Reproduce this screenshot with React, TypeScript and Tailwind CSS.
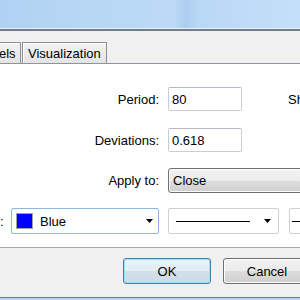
import React from "react";

const Arrow = () => (
  <svg width="7" height="4" viewBox="0 0 7 4" className="shrink-0">
    <path d="M0 0h7L3.5 4z" fill="#000" />
  </svg>
);

export default function App() {
  return (
    <div className="w-[300px] h-[300px] overflow-hidden flex flex-col bg-white font-['Liberation_Sans',Arial,sans-serif] text-[13px] text-black leading-none">
      {/* window frame top */}
      <div className="h-[28px] shrink-0 bg-[linear-gradient(90deg,#b0d1f2_0%,#b8d7f5_30%,#bcdaf6_58%,#abcdef_62%,#b9d8f6_66%,#c4dff9_100%)]" />
      <div className="h-px shrink-0 bg-[#e6f1fb]" />
      <div className="h-[2px] shrink-0 bg-[#707f90]" />
      {/* tab strip */}
      <div className="h-[33px] shrink-0 bg-[#f0f0f0] border-b border-[#8d949c] flex items-end">
        <div className="h-[21px] w-[21px] flex items-center border-t border-r border-[#8c8f96] bg-[linear-gradient(#f3f3f3,#e4e4e4)] shadow-[inset_0_1px_0_#ffffff]">
          <span className="ml-[-1px]">els</span>
        </div>
        <div className="h-[21px] ml-[1px] flex items-center pl-[5px] pr-[5px] border-t border-x border-[#8c8f96] bg-[linear-gradient(#f3f3f3,#e4e4e4)] shadow-[inset_1px_1px_0_#ffffff]">
          Visualization
        </div>
      </div>
      {/* content */}
      <div className="flex-1 bg-white flex flex-col">
        <div className="flex items-center h-[24px] mt-[23px]">
          <div className="w-[159px] text-right shrink-0">Period:</div>
          <div className="ml-[9px] w-[74px] h-[24px] shrink-0 border border-[#c9ced6] border-t-[#b4b9c1] rounded-[2px] flex items-center pl-[3px]">80</div>
          <div className="ml-[46px] whitespace-nowrap">Shift:</div>
        </div>
        <div className="flex items-center h-[24px] mt-[17px]">
          <div className="w-[159px] text-right shrink-0">Deviations:</div>
          <div className="ml-[9px] w-[74px] h-[24px] shrink-0 border border-[#c9ced6] border-t-[#b4b9c1] rounded-[2px] flex items-center pl-[3px]">0.618</div>
        </div>
        <div className="flex items-center h-[25px] mt-[16px]">
          <div className="w-[159px] text-right shrink-0">Apply to:</div>
          <div className="ml-[9px] w-[160px] h-[25px] shrink-0 border border-[#707070] rounded-[3px] flex items-center pl-[4px] bg-[linear-gradient(#f2f2f2_0%,#ebebeb_50%,#dddddd_51%,#cfcfcf_100%)] shadow-[inset_0_0_0_1px_#fcfcfc]">Close</div>
        </div>
        <div className="flex items-center h-[26px] mt-[15px]">
          <div className="w-[11px] shrink-0 pl-[0px]">:</div>
          <div className="w-[148px] h-[26px] shrink-0 border border-[#8cb8e2] rounded-[2px] flex items-center pl-[4px] pr-[5px]">
            <div className="w-[17px] h-[16px] border border-[#a0a0a0] bg-[#0000ff] shrink-0" />
            <span className="ml-[7px] flex-1">Blue</span>
            <Arrow />
          </div>
          <div className="ml-[9px] w-[111px] h-[26px] shrink-0 border border-[#cdd1d6] rounded-[2px] flex items-center pl-[7px] pr-[7px]">
            <div className="w-[74px] h-px bg-black" />
            <div className="flex-1" />
            <Arrow />
          </div>
          <div className="ml-[10px] w-[60px] h-[26px] shrink-0 border border-[#cdd1d6] rounded-[2px] flex items-center pl-[2px]">
            <div className="w-[40px] h-px bg-black" />
          </div>
        </div>
      </div>
      {/* button area */}
      <div className="h-[50px] shrink-0 bg-[#f0f0f0] border-t border-[#a9a9a9] flex items-start">
        <div className="ml-[123px] mt-[10px] w-[88px] h-[26px] shrink-0 border border-[#3c7fb1] rounded-[3px] flex items-center justify-center bg-[linear-gradient(#eaf3f9_0%,#e1ebf2_50%,#d2e0ea_51%,#cbdbe6_100%)] shadow-[inset_0_0_0_1px_#9fe0fb]">OK</div>
        <div className="ml-[12px] mt-[10px] w-[88px] h-[26px] shrink-0 border border-[#707070] rounded-[3px] flex items-center justify-center bg-[linear-gradient(#f2f2f2_0%,#ebebeb_50%,#dddddd_51%,#cfcfcf_100%)] shadow-[inset_0_0_0_1px_#fcfcfc]">Cancel</div>
      </div>
      <div className="h-px shrink-0 bg-[#6f7c8c]" />
      <div className="h-[2px] shrink-0 bg-[#b7d3ee]" />
    </div>
  );
}
